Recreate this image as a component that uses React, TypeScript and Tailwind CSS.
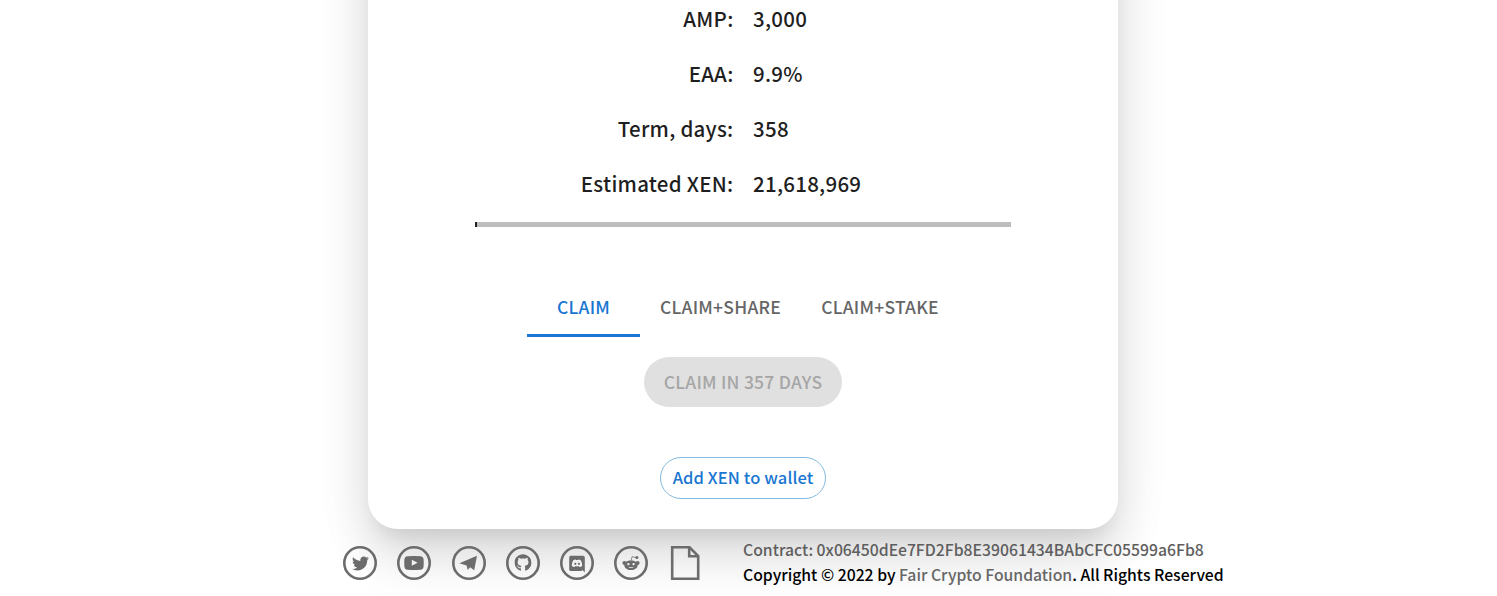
import { FaGithub, FaTwitter } from "react-icons/fa"
import { ReactNode, useState } from "react"

type StatType = {
    label: string
    value: string
}

const stats: StatType[] = [
    { label: "AMP:", value: "3,000" },
    { label: "EAA:", value: "9.9%" },
    { label: "Term, days:", value: "358" },
    { label: "Estimated XEN:", value: "21,618,969" },
]

const tabs = [
    { name: "CLAIM", width: "w-[113px]" },
    { name: "CLAIM+SHARE", width: "w-[161px]" },
    { name: "CLAIM+STAKE", width: "w-[158px]" },
]

function SocialIcon({ children }: { children: ReactNode }){
    return(
        <a href="#" className="block size-[34px]">
            <svg viewBox="0 0 34 34" className="size-[34px]" fill="currentColor">
                <circle cx="17" cy="17" r="15.7" fill="none" stroke="currentColor" strokeWidth="2.6" />
                {children}
            </svg>
        </a>
    )
}

function Socials(){
    return(
        <div className="flex h-[34px] w-[358px] gap-[20.3px] text-[#6c6c6c]">
            <SocialIcon><FaTwitter x="9" y="9" size="17" /></SocialIcon>
            <SocialIcon>
                <path fillRule="evenodd" d="M10.5 10.2Q17 9.6 23.5 10.2Q26.4 10.5 26.6 13.4Q26.9 17 26.6 20.6Q26.4 23.5 23.5 23.8Q17 24.4 10.5 23.8Q7.6 23.5 7.4 20.6Q7.1 17 7.4 13.4Q7.6 10.5 10.5 10.2ZM14.8 13.8V19.8L20.6 16.8Z" />
            </SocialIcon>
            <SocialIcon>
                <path d="M7.4 17.3L25 9.8L22.2 24.2L18 21.3L15.8 24L14.6 19.4Z" />
            </SocialIcon>
            <SocialIcon><FaGithub x="8.3" y="8" size="17.4" /></SocialIcon>
            <SocialIcon>
                <path fillRule="evenodd" d="M10.8 9.8H23.2Q24.8 9.8 24.8 11.4V26.2L21.6 23.6L22 25H10.8Q9.2 25 9.2 23.4V11.4Q9.2 9.8 10.8 9.8ZM13.2 14.2Q11.8 16.8 11.8 19.8Q12.8 21.1 14.4 21.1L15 20.3H19L19.6 21.1Q21.2 21.1 22.2 19.8Q22.2 16.8 20.8 14.2Q19.6 13.4 18.4 13.4L18 13.9H16L15.6 13.4Q14.4 13.4 13.2 14.2Z" />
                <circle cx="15.3" cy="17.8" r="1.1" />
                <circle cx="18.9" cy="17.8" r="1.1" />
            </SocialIcon>
            <SocialIcon>
                <path d="M17 14.7L18.1 10.7L22 11.5" fill="none" stroke="currentColor" strokeWidth="0.8" />
                <circle cx="22.9" cy="11.6" r="1.5" />
                <circle cx="10.4" cy="17" r="2" />
                <circle cx="23.6" cy="17" r="2" />
                <path fillRule="evenodd" d="M17 14.5C21 14.5 23.7 16.6 23.7 19.2S21 24 17 24S10.3 21.8 10.3 19.2S13 14.5 17 14.5ZM14.4 16.9A1.2 1.2 0 1 0 14.4 19.3A1.2 1.2 0 1 0 14.4 16.9ZM19.6 16.9A1.2 1.2 0 1 0 19.6 19.3A1.2 1.2 0 1 0 19.6 16.9ZM14 20.7Q17 23.1 20 20.7Q17 21.6 14 20.7Z" />
            </SocialIcon>
            <a href="#" className="ml-[1.5px] block">
                <svg viewBox="0 0 30 34" className="h-[34px] w-[30px]" fill="none" stroke="currentColor" strokeWidth="2.6">
                    <path d="M2.2 1.3H19.5L28.2 10V32.7H2.2Z" />
                    <path d="M19.2 1.3V10.2H28.2" />
                </svg>
            </a>
        </div>
    )
}

export default function App(){
    const [ active, setActive ] = useState<string>("CLAIM")

    return(
        <main className="h-[596px] overflow-hidden bg-white font-['Noto_Sans_CJK_JP',sans-serif] font-medium text-[#1f1f1f]">
            <section className="-mt-[200px] ml-[368px] flex h-[729px] w-[750px] flex-col items-center rounded-[30px] bg-white pt-[200px] shadow-[0px_14px_19px_-9px_rgba(0,0,0,0.09),0px_30px_48px_0px_rgba(0,0,0,0.1),0px_11px_58px_0px_rgba(0,0,0,0.08)]">
                <div className="-mt-[10px] w-full">
                    {stats.map((stat: StatType)=> (
                        <div key={stat.label} className="flex h-[55px] items-center text-[20.5px] leading-[30px] tracking-[0.26px]">
                            <p className="w-[365.5px] text-right">{stat.label}</p>
                            <p className="ml-[19.5px]">{stat.value}</p>
                        </div>
                    ))}
                </div>
                <div className="mt-[12px] h-[5px] w-[536px] bg-[#bdbdbd]">
                    <div className="h-full w-[2px] bg-[#212121]"></div>
                </div>
                <div className="mt-[50px] flex h-[60px] w-[432px] text-[17.5px] leading-[24px] tracking-[0.24px]">
                    {tabs.map((tab)=> (
                        <button
                        key={tab.name}
                        className={`${tab.width} shrink-0 border-b-3 pt-[3px] ${active == tab.name ? "border-[#1976d2] text-[#1976d2]" : "border-transparent text-[#666666]"}`}
                        onClick={()=> setActive(tab.name)}>{tab.name}</button>
                    ))}
                </div>
                <button disabled className="mt-5 h-[50px] w-[198px] rounded-full bg-[#e0e0e0] text-[17.5px] leading-[24px] tracking-[0.24px] text-[#a6a6a6]">CLAIM IN 357 DAYS</button>
                <button className="mt-[50px] h-[42px] w-[166px] rounded-full border border-[#85bae0] pb-[2px] text-[16.5px] leading-[24px] tracking-[0.1px] text-[#1976d2]">Add XEN to wallet</button>
            </section>
            <footer className="relative flex pl-[343px] pt-[8px]">
                <div className="pt-[9px]"><Socials /></div>
                <div className="ml-[42px] whitespace-nowrap text-[15.75px] leading-[25px] text-black">
                    <p className="text-[#5e5e5e]">Contract: 0x06450dEe7FD2Fb8E39061434BAbCFC05599a6Fb8</p>
                    <p>Copyright © 2022 by <a href="#" className="text-[#666666]">Fair Crypto Foundation</a>. All Rights Reserved</p>
                </div>
            </footer>
        </main>
    )
}
